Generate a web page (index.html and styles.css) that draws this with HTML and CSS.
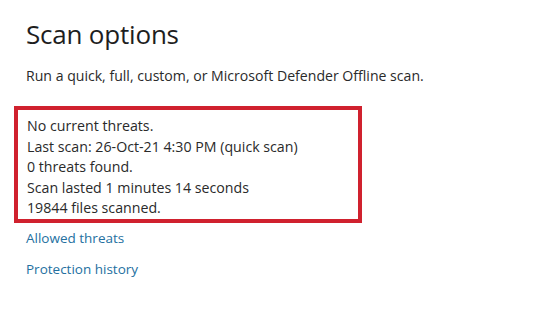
FILE: index.html
```html
<!DOCTYPE html>
<html>
<head>
<meta charset="utf-8">
<link rel="stylesheet" href="styles.css">
</head>
<body>
<div class="page">
  <h1 class="title">Scan options</h1>
  <p class="subtitle">Run a quick, full, custom, or Microsoft Defender Offline scan.</p>
  <div class="status">
    <div class="line">No current threats.</div>
    <div class="line">Last scan: 26-Oct-21 4:30 PM (quick scan)</div>
    <div class="line">0 threats found.</div>
    <div class="line">Scan lasted 1 minutes 14 seconds</div>
    <div class="line">19844 files scanned.</div>
  </div>
  <div class="links">
    <a class="link" href="#">Allowed threats</a>
    <a class="link" href="#">Protection history</a>
  </div>
</div>
</body>
</html>
```
FILE: styles.css
```css
html, body {
  margin: 0;
  padding: 0;
  background: #ffffff;
}
body {
  width: 540px;
  height: 316px;
  overflow: hidden;
  font-family: "Open Sans", "Noto Sans", "Liberation Sans", sans-serif;
  color: #262626;
}
.page {
  padding: 16px 0 0 26px;
}
.title {
  margin: 0;
  font-size: 26px;
  font-weight: 400;
  line-height: 36px;
  color: #1e1e1e;
  letter-spacing: -0.2px;
}
.subtitle {
  margin: 14px 0 0 0;
  font-size: 14.1px;
  line-height: 20px;
  color: #2a2a2a;
}
.status {
  box-sizing: border-box;
  margin: 20px 0 0 -12px;
  width: 348px;
  height: 117px;
  border: 4px solid #d0212e;
  padding: 6px 0 0 9px;
}
.line {
  font-size: 14.2px;
  line-height: 20.5px;
  color: #2a2a2a;
}
.links {
  display: flex;
  flex-direction: column;
  align-items: flex-start;
  gap: 11px;
  margin-top: 5px;
}
.link {
  font-size: 13.5px;
  line-height: 20px;
  color: #24709f;
  text-decoration: none;
}
```
